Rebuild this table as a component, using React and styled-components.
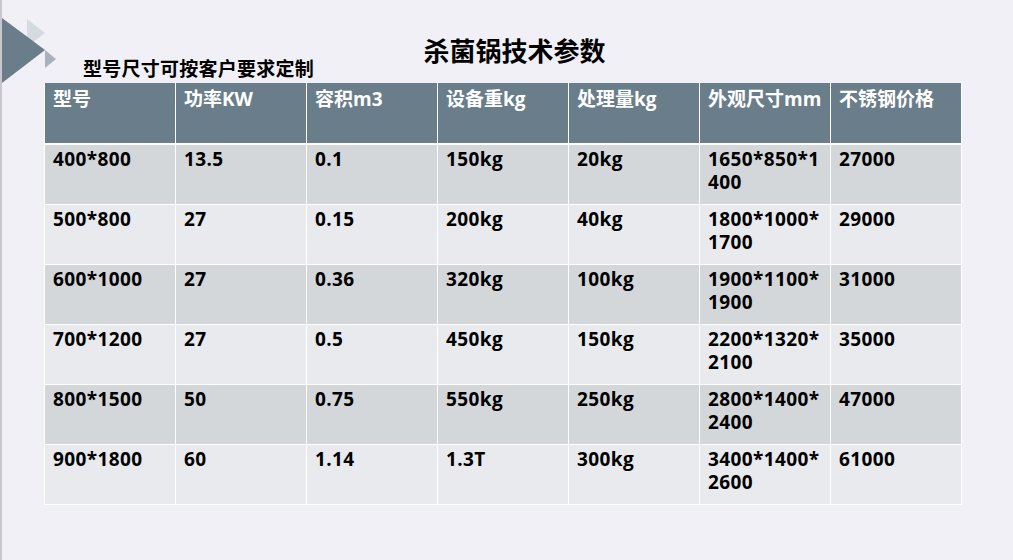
import React from 'react';
import styled, { createGlobalStyle } from 'styled-components';

const GlobalStyle = createGlobalStyle`
  html, body {
    margin: 0;
    padding: 0;
    background: #f2f0f7;
  }
`;

const Slide = styled.div`
  width: 1011px;
  height: 560px;
  border-left: 2px solid #c9c7cd;
  background: #f2f0f7;
  font-family: "Open Sans", "Noto Sans CJK SC", sans-serif;
  font-weight: 700;
  color: #000;
  overflow: hidden;
`;

const Header = styled.header`
  position: relative;
  height: 83px;
`;

const Logo = styled.svg`
  position: absolute;
  left: 0;
  top: 0;
`;

const Title = styled.h1`
  margin: 0;
  padding: 37px 0 0 14px;
  font-family: "Noto Sans CJK SC", sans-serif;
  font-size: 26px;
  line-height: 26px;
  font-weight: 700;
  text-align: center;
`;

const Subtitle = styled.h2`
  margin: -5px 0 0;
  padding-left: 81px;
  font-family: "Noto Sans CJK SC", sans-serif;
  font-size: 19px;
  line-height: 19px;
  font-weight: 700;
  letter-spacing: 0.25px;
`;

const Table = styled.table`
  margin-left: 42px;
  width: 918px;
  table-layout: fixed;
  border-collapse: separate;
  border-spacing: 0;
  border-left: 1px solid #fff;
`;

const HeadCell = styled.th`
  height: 62px;
  padding: 5px 8px 0;
  box-sizing: border-box;
  background: #6a7d8a;
  color: #fff;
  font-size: 19px;
  line-height: 23px;
  font-weight: 700;
  text-align: left;
  vertical-align: top;
  border-right: 1px solid #fff;
  border-bottom: 2px solid #fff;
`;

const Cell = styled.td`
  height: 60px;
  padding: 3px 8px 0;
  box-sizing: border-box;
  background: ${(p) => (p.$odd ? '#d4d7da' : '#e9eaed')};
  font-size: 19px;
  line-height: 23px;
  letter-spacing: 0.4px;
  vertical-align: top;
  word-break: break-all;
  border-right: 1px solid #fff;
  border-bottom: 1px solid #fff;
`;

const columns = ['型号', '功率KW', '容积m3', '设备重kg', '处理量kg', '外观尺寸mm', '不锈钢价格'];

const rows = [
  ['400*800', '13.5', '0.1', '150kg', '20kg', '1650*850*1400', '27000'],
  ['500*800', '27', '0.15', '200kg', '40kg', '1800*1000*1700', '29000'],
  ['600*1000', '27', '0.36', '320kg', '100kg', '1900*1100*1900', '31000'],
  ['700*1200', '27', '0.5', '450kg', '150kg', '2200*1320*2100', '35000'],
  ['800*1500', '50', '0.75', '550kg', '250kg', '2800*1400*2400', '47000'],
  ['900*1800', '60', '1.14', '1.3T', '300kg', '3400*1400*2600', '61000'],
];

const App = () => (
  <>
    <GlobalStyle />
    <Slide>
      <Header>
        <Logo width="60" height="90" viewBox="0 0 60 90">
          <polygon points="25,19 43,33 25,47" fill="#d5d9e0" />
          <polygon points="0,18 43,50 0,83" fill="#6a7d8a" />
          <polygon points="43,50 54,59 43,68" fill="#a9b1bc" />
        </Logo>
        <Title>杀菌锅技术参数</Title>
        <Subtitle>型号尺寸可按客户要求定制</Subtitle>
      </Header>
      <Table>
        <thead>
          <tr>
            {columns.map((c) => (
              <HeadCell key={c}>{c}</HeadCell>
            ))}
          </tr>
        </thead>
        <tbody>
          {rows.map((r, i) => (
            <tr key={r[0]}>
              {r.map((v, j) => (
                <Cell key={j} $odd={i % 2 === 0}>{v}</Cell>
              ))}
            </tr>
          ))}
        </tbody>
      </Table>
    </Slide>
  </>
);

export default App;
